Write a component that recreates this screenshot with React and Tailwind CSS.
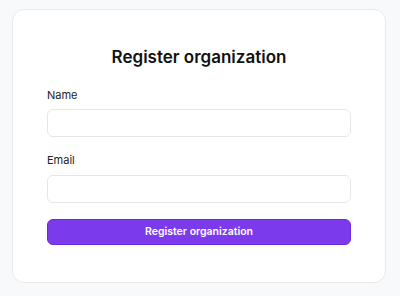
import React, { useState } from "react";

const App = () => {
  const [name, setName] = useState("");
  const [email, setEmail] = useState("");

  return (
    <div className="min-h-screen bg-[#f8f9fb] pl-3 pr-[14px] pt-[9px] pb-4 font-['Inter','Liberation_Sans',sans-serif]">
      <div className="bg-white border border-[#e8e9ec] rounded-xl pt-[33px] pb-[37px] px-[34px]">
        <h1 className="text-center text-[17px] leading-7 font-semibold text-[#111] mb-4">
          Register organization
        </h1>
        <form onSubmit={(e) => e.preventDefault()}>
          <label className="block text-[11px] leading-4 font-normal text-[#222] mb-1.5">Name</label>
          <input
            type="text"
            value={name}
            onChange={(e) => setName(e.target.value)}
            className="block w-full h-7 rounded-md border border-[#e5e7eb] bg-white px-2 text-[12px] outline-none"
          />
          <label className="block text-[11px] leading-4 font-normal text-[#222] mt-[15px] mb-[7px]">Email</label>
          <input
            type="email"
            value={email}
            onChange={(e) => setEmail(e.target.value)}
            className="block w-full h-7 rounded-md border border-[#e5e7eb] bg-white px-2 text-[12px] outline-none"
          />
          <button
            type="submit"
            className="block w-full h-[26px] mt-[16px] rounded-md bg-[#7c3aed] border border-[#6d28d9] text-white text-[10.5px] font-semibold"
          >
            Register organization
          </button>
        </form>
      </div>
    </div>
  );
};

export default App;
